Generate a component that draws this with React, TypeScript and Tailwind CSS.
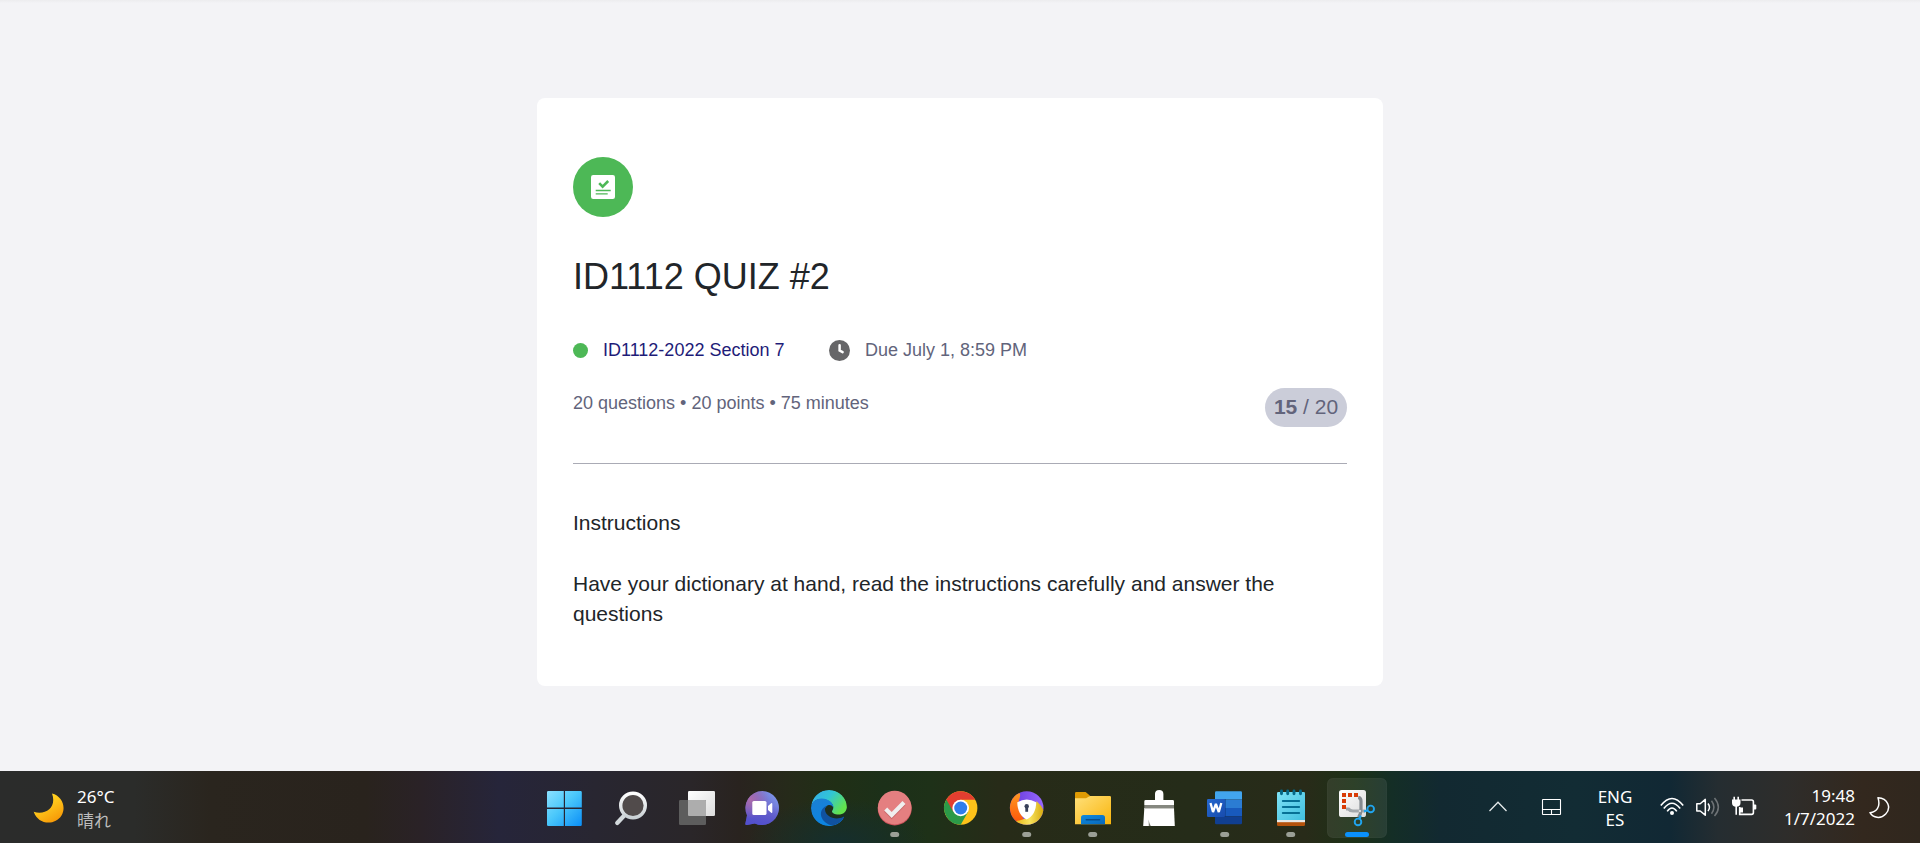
import React from "react";

const Slot = ({ children, active, running }: { children: React.ReactNode; active?: boolean; running?: boolean }) => (
  <svg width="66" height="72" viewBox="0 0 66 72" className="block shrink-0">
    {active && <rect x="4.5" y="7.5" width="59" height="59" rx="5" fill="#ffffff" fillOpacity=".08" stroke="#ffffff" strokeOpacity=".06" />}
    {children}
    {running && <rect x="29.2" y="61" width="9" height="5" rx="2.5" fill="#9b9f96" />}
    {active && <rect x="22" y="61" width="24" height="5" rx="2.5" fill="#0a91fb" />}
  </svg>
);

const Gradients = () => (
  <svg width="0" height="0" className="absolute">
    <defs>
      <linearGradient id="win" gradientUnits="userSpaceOnUse" x1="16" y1="20" x2="51" y2="55">
        <stop stopColor="#8be0ff" /><stop offset=".45" stopColor="#4bc8fb" /><stop offset="1" stopColor="#0a8ef7" />
      </linearGradient>
      <linearGradient id="grey" x1="0" y1="0" x2="1" y2="1"><stop stopColor="#ffffff" /><stop offset="1" stopColor="#dcdcdc" /></linearGradient>
      <linearGradient id="ring" x1="0" y1="0" x2="0" y2="1"><stop stopColor="#ffffff" /><stop offset="1" stopColor="#c9d0d4" /></linearGradient>
      <linearGradient id="chat" x1="0" y1="1" x2="1" y2="0">
        <stop stopColor="#5b50c8" /><stop offset=".5" stopColor="#6b62c8" /><stop offset="1" stopColor="#82a4f4" />
      </linearGradient>
      <radialGradient id="chatPink" cx=".15" cy=".25" r=".55"><stop stopColor="#ac6cab" /><stop offset="1" stopColor="#ac6cab" stopOpacity="0" /></radialGradient>
      <linearGradient id="chatLow" x1="0" y1="0" x2="0" y2="1"><stop offset=".45" stopColor="#4e4fce" stopOpacity="0" /><stop offset="1" stopColor="#4e4fce" /></linearGradient>
      <linearGradient id="edgeTop" x1="0" y1="0" x2="1" y2=".55">
        <stop stopColor="#35a9ef" /><stop offset=".5" stopColor="#31c5d5" /><stop offset="1" stopColor="#62e34d" />
      </linearGradient>
      <linearGradient id="edgeMid" x1="0" y1="0" x2=".4" y2="1"><stop stopColor="#1c7fd3" /><stop offset="1" stopColor="#0b85e2" /></linearGradient>
      <linearGradient id="avPurple" x1="0" y1="0" x2="1" y2="0"><stop stopColor="#6237d9" /><stop offset="1" stopColor="#9a69ff" /></linearGradient>
      <linearGradient id="avOrange" x1="0" y1="0" x2="0" y2="1"><stop stopColor="#ff9a24" /><stop offset="1" stopColor="#fb4e07" /></linearGradient>
      <linearGradient id="avYellow" x1="0" y1="0" x2="1" y2="0"><stop stopColor="#e7b614" /><stop offset=".5" stopColor="#f8e35d" /><stop offset="1" stopColor="#d6a80c" /></linearGradient>
      <linearGradient id="folder" x1="0" y1="0" x2="1" y2="1"><stop stopColor="#ffe07a" /><stop offset="1" stopColor="#f9b50c" /></linearGradient>
      <linearGradient id="folderBlue" x1="0" y1="0" x2="1" y2="1"><stop stopColor="#0f8ade" /><stop offset="1" stopColor="#0868bb" /></linearGradient>
      <linearGradient id="note" x1="0" y1="0" x2="1" y2="1"><stop stopColor="#7ee2f6" /><stop offset="1" stopColor="#41bfdf" /></linearGradient>
      <linearGradient id="wordBox" x1="0" y1="0" x2="1" y2="1"><stop stopColor="#2568cf" /><stop offset="1" stopColor="#174bad" /></linearGradient>
      <linearGradient id="moon" x1="0" y1="0" x2=".6" y2="1"><stop stopColor="#ffe02a" /><stop offset=".5" stopColor="#ffc71b" /><stop offset="1" stopColor="#f79b08" /></linearGradient>
      <clipPath id="avClip"><circle cx="33.7" cy="37" r="16.8" /></clipPath>
      <clipPath id="edgeClip"><circle cx="34" cy="37" r="18" /></clipPath>
      <clipPath id="wordClip"><rect x="24" y="20.3" width="27" height="33" rx="1.2" /></clipPath>
    </defs>
  </svg>
);

const Apps = () => (
  <div className="flex w-[858px] shrink-0">
    <Slot>
      <path d="M17.2 20H32.8V36.6H16V21.2Q16 20 17.2 20ZM34 20H49.6Q50.8 20 50.8 21.2V36.6H34ZM16 38H32.8V55H17.2Q16 55 16 53.8ZM34 38H50.8V53.8Q50.8 55 49.6 55H34Z" fill="url(#win)" />
    </Slot>
    <Slot>
      <path d="M27.5 44.2L20.2 52" stroke="#d3d9dc" strokeWidth="4.2" strokeLinecap="round" />
      <circle cx="36" cy="34.5" r="12.3" fill="#55504f" fillOpacity=".9" stroke="url(#ring)" strokeWidth="3.4" />
    </Slot>
    <Slot>
      <rect x="25" y="20" width="27" height="25" rx="1.2" fill="url(#grey)" />
      <rect x="16" y="29" width="27" height="25" rx="1.2" fill="#5d5d5d" />
      <path d="M25 29H42Q43 29 43 30V45H26Q25 45 25 44Z" fill="#adadad" />
    </Slot>
    <Slot>
      <path d="M33.3 20A17 17 0 1 1 25.8 52.4L18 54Q16 54.3 16.4 52.4L18 44.2A17 17 0 0 1 33.3 20Z" fill="url(#chat)" />
      <path d="M33.3 20A17 17 0 1 1 25.8 52.4L18 54Q16 54.3 16.4 52.4L18 44.2A17 17 0 0 1 33.3 20Z" fill="url(#chatLow)" fillOpacity=".8" />
      <path d="M33.3 20A17 17 0 1 1 25.8 52.4L18 54Q16 54.3 16.4 52.4L18 44.2A17 17 0 0 1 33.3 20Z" fill="url(#chatPink)" />
      <rect x="23.3" y="30" width="14.2" height="14" rx="1.6" fill="#fff" />
      <path d="M39 35L42.2 32.3Q43.3 31.7 43.3 33V41Q43.3 42.4 42.2 41.8L39 39Z" fill="#fff" />
    </Slot>
    <Slot>
      <g clipPath="url(#edgeClip)">
        <path d="M16 36C17 25 25 19 34 19C45 19 52 27 52 35C52 41 48 43.5 43.5 43.5C39.5 43.5 37 42 37 40.5C37 39.5 38.3 38.9 38.3 36.5C38.3 32 33 28 26 28C20 28 17 32 16 36Z" fill="url(#edgeTop)" />
        <path d="M16 37C16 31 21 27.5 26.5 27.5C33.5 27.5 38.5 32 38.5 36.5C37 34.4 35 33.6 33 34.3C30 35.5 28 40 31 45C34 50 41 51 48.5 47.5C46 52.5 40.5 55 34 55C23 55 16 47 16 37Z" fill="url(#edgeMid)" />
        <path d="M31.8 34.8C27 36.4 24.3 42 27 47.2C29.3 52 34.5 54.5 39 54.4C43.6 52.8 47 50.3 49 46.8C49.4 46.1 48.8 45.6 48 46C40 50 30 45 30 38.5C30 37 30.7 35.6 31.8 34.8Z" fill="#10529f" />
      </g>
    </Slot>
    <Slot running>
      <circle cx="33.7" cy="37.4" r="17" fill="#c95059" />
      <circle cx="33.7" cy="36.6" r="16.8" fill="#e47f80" />
      <path d="M24.7 39L30.7 45L43 32.3" fill="none" stroke="#a94d50" strokeOpacity=".45" strokeWidth="4.6" />
      <path d="M24.7 38L30.7 44L43 31.5" fill="none" stroke="#f0efef" strokeWidth="4.2" />
    </Slot>
    <Slot>
      <circle cx="33.7" cy="37" r="16.7" fill="#fdc21a" />
      <path d="M33.7 37L19.3 28.6A16.7 16.7 0 0 0 33.7 53.7L41 41Z" fill="#2b9a48" />
      <path d="M19.3 28.6A16.7 16.7 0 0 1 48.2 28.7H33.7L26.4 41Z" fill="#e33e30" />
      <circle cx="33.7" cy="37" r="8.3" fill="#fff" /><circle cx="33.7" cy="37" r="6.5" fill="#2f7ded" />
    </Slot>
    <Slot running>
      <g clipPath="url(#avClip)">
        <rect x="16" y="19" width="36" height="36" fill="url(#avPurple)" />
        <path d="M25.4 21C30 24 24 30 25.2 36C26 42 31 46.5 31 50L22 55L14 40L15 26Z" fill="url(#avOrange)" />
        <path d="M22 50C31 50 42 44 43.6 30Q48 34 51 40L48 55L28 56Z" fill="url(#avYellow)" />
      </g>
      <path d="M24.3 31.2Q33.7 25.6 43.2 31.2C43.2 39 39.7 46 33.7 48.4C27.7 46 24.3 39 24.3 31.2Z" fill="#fff" />
      <circle cx="33.7" cy="35.3" r="2.2" fill="#38415a" /><path d="M32.3 36H35.1V40.8H32.3Z" fill="#38415a" />
    </Slot>
    <Slot running>
      <path d="M16 22.2Q16 21 17.2 21H26.6L30.8 24.5V30H16Z" fill="#df9b04" />
      <path d="M16 27.3H27L31 25H50.8Q52 25 52 26.2V53.3H16Z" fill="url(#folder)" />
      <path d="M22 53.3V46.6Q22 44 24.6 44H43.4Q46 44 46 46.6V53.3Z" fill="url(#folderBlue)" />
      <rect x="26.5" y="48.1" width="14.8" height="1.4" rx=".7" fill="#074d8c" />
    </Slot>
    <Slot>
      <path d="M30 29V23Q30 19 34.2 19Q38.4 19 38.4 23V29H47.7Q49 29 49 30.4V34H19.3V30.4Q19.3 29 20.7 29Z" fill="#fff" />
      <rect x="19.3" y="34" width="29.7" height="3" fill="#85877f" />
      <path d="M19.3 37H49L49.8 55H18.2Z" fill="#fff" /><rect x="19.3" y="37" width="29.7" height="1" fill="#c8c9c4" />
      <path d="M23.6 48.5Q24 52 25.8 55H23.8Z" fill="#77796e" />
    </Slot>
    <Slot running>
      <g clipPath="url(#wordClip)">
        <path d="M24 20H51V28.5H24Z" fill="#42a5ee" /><path d="M24 28.5H51V37H24Z" fill="#2b7cd3" />
        <path d="M24 37H51V45.2H24Z" fill="#185abd" /><path d="M24 45.2H51V54H24Z" fill="#103f91" />
      </g>
      <path d="M24 28H35V46H24Z" fill="#0b3274" fillOpacity=".45" />
      <rect x="16" y="28" width="18" height="18" rx="1.3" fill="url(#wordBox)" />
      <path d="M19.5 32L22 41L24.9 33L27.8 41L30.3 32" fill="none" stroke="#fff" strokeWidth="2.3" strokeLinejoin="bevel" />
    </Slot>
    <Slot running>
      <rect x="20" y="44" width="28" height="11" rx="1.2" fill="#b4520c" />
      <path d="M20 45H48V51.2H20Z" fill="#e8e8e6" />
      <path d="M21.3 21H46.7Q48 21 48 22.3V49H20V22.3Q20 21 21.3 21Z" fill="url(#note)" />
      <path d="M24.5 20V22.7M30.7 20V22.7M37 20V22.7M43.5 20V22.7" stroke="#066888" strokeWidth="2.9" strokeLinecap="round" />
      <path d="M25.8 30H42.2M25.8 36H42.2M25.8 42H42.2" stroke="#067095" strokeWidth="1.9" strokeLinecap="round" />
    </Slot>
    <Slot active>
      <rect x="16" y="19" width="27" height="27" rx="2.6" fill="url(#grey)" />
      <path d="M19 22H23V26H19ZM25 22H29V26H25ZM31 22H35V26H31ZM19 28H23V32H19ZM19 34H23V38H19Z" fill="#d93b06" />
      <path d="M23 38H25.5Q27 40 30 40H42" fill="none" stroke="#a3a8ac" strokeWidth="3.2" />
      <path d="M35.2 26.3Q38 26.8 38 30V38Q38 43 35.6 46.5" fill="none" stroke="#858b90" strokeWidth="3.2" />
      <circle cx="36.9" cy="40" r="1.2" fill="#d6d9db" />
      <circle cx="47.7" cy="37.9" r="3.3" fill="none" stroke="#20a4ee" strokeWidth="1.9" />
      <circle cx="35" cy="50.9" r="3.3" fill="none" stroke="#20a4ee" strokeWidth="1.9" />
      <path d="M41 40.4L44.9 39.3M37.8 44.5L36.4 48" stroke="#20a4ee" strokeWidth="2.2" />
    </Slot>
  </div>
);

const Tray = () => (
  <div className="flex flex-1 text-[17px] leading-[23px] text-white">
    <svg width="24" height="72" viewBox="0 0 24 72" className="ml-[97px]" fill="none" stroke="#e5eaeb" strokeWidth="1.3"><path d="M3.5 40L12 31.2L20.5 40" /></svg>
    <svg width="24" height="72" viewBox="0 0 24 72" className="ml-[30px]" fill="none" stroke="#fff" strokeWidth="1.1"><rect x="2.5" y="28.5" width="18" height="15" rx=".5" /><path d="M2.5 38.5H20.5M11.5 38.5V43.5" /></svg>
    <div className="ml-[26px] w-[50px] pt-[14px] text-center">ENG<br />ES</div>
    <svg width="24" height="72" viewBox="0 0 24 72" className="ml-5" fill="none" stroke="#fff" strokeWidth="1.6">
      <path d="M.8 34.6Q12 20.4 23.2 34.6" /><path d="M3.8 37.6Q12 26.8 20.2 37.6" /><path d="M7.2 40.4Q12 33.6 16.8 40.4" /><circle cx="12" cy="42" r="2" fill="#fff" stroke="none" />
    </svg>
    <svg width="28" height="72" viewBox="0 0 28 72" className="ml-[10px]" fill="none" stroke="#fff" strokeWidth="1.5">
      <path d="M2.8 32.7H6.2L11.3 28.4V44.2L6.2 40H2.8Z" strokeLinejoin="round" /><path d="M14 32.5Q17 36.3 14 40.1" />
      <path d="M17.5 29.8Q22.3 36.3 17.5 42.8M20.5 27Q28.2 36.3 20.5 45" stroke="#6e7376" />
    </svg>
    <svg width="28" height="72" viewBox="0 0 28 72" className="ml-[9px]" fill="none" stroke="#fff" strokeWidth="1.6">
      <path d="M10.5 29H20.6Q22.4 29 22.4 30.8V41.6Q22.4 43.4 20.6 43.4H8.7V36" /><rect x="22" y="33.5" width="3.3" height="5" rx="1" fill="#fff" stroke="none" />
      <path d="M3.2 25.8V29M7.2 25.8V29M5.2 34V43.7" /><path d="M1 28.5H9.5V32Q9.5 35.7 5.2 35.7Q1 35.7 1 32Z" fill="#fff" stroke="none" />
      <path d="M8.7 36.5H12V41.5H8.7Z" fill="#fff" stroke="none" />
    </svg>
    <div className="ml-[6px] w-[90px] pt-[13px] text-right">19:48<br />1/7/2022</div>
    <svg width="24" height="72" viewBox="0 0 24 72" className="ml-3" fill="none" stroke="#fff" strokeWidth="1.5" strokeLinejoin="round"><path d="M11 26.7C21 27 24.5 37 18.7 43C13.5 48.6 6 46.8 3 41.7C9 41.2 14 36.5 11 26.7Z" /></svg>
  </div>
);

export default function App() {
  return (
    <div className="flex h-[843px] w-[1920px] flex-col overflow-hidden bg-[#f3f3f6] font-['Liberation_Sans',Arial,sans-serif]">
      <Gradients />
      <div className="h-[3px] shrink-0 bg-linear-to-b from-[#ececee] to-[#f3f3f6]" />
      <main className="flex h-[768px] shrink-0 justify-center pt-[95px]">
        <section className="h-[588px] w-[846px] rounded-lg bg-white px-9 pt-[59px] text-[#212529]">
          <svg width="60" height="60" viewBox="0 0 60 60" className="block">
            <circle cx="30" cy="30" r="30" fill="#4db856" />
            <rect x="18" y="18" width="24" height="24" rx="2.2" fill="#fff" />
            <path d="M26.2 26.2L29.6 29.6L35.2 24" fill="none" stroke="#4db856" strokeWidth="2.6" />
            <path d="M22.7 33.5H37.7M22.7 36.8H34.7" stroke="#4db856" strokeWidth="1.3" />
          </svg>
          <h1 className="mt-[33px] text-4xl leading-[54px]">ID1112 QUIZ #2</h1>
          <div className="mt-[32px] flex h-[28px] items-center text-lg leading-[28px]">
            <span className="mr-[15px] h-[15px] w-[15px] rounded-full bg-[#4db856]" />
            <span className="w-[226px] text-[#1e1c78]">ID1112-2022 Section 7</span>
            <svg width="21" height="21" viewBox="0 0 21 21" className="mr-[15px]"><circle cx="10.5" cy="10.5" r="10.5" fill="#666668" /><path d="M10.6 5.2V10.6L13.6 12.2" fill="none" stroke="#fff" strokeWidth="2.5" strokeLinecap="round" /></svg>
            <span className="text-[#62647b]">Due July 1, 8:59 PM</span>
          </div>
          <div className="mt-[24px] flex h-[39px] items-start justify-between text-[#62647b]">
            <span className="text-lg leading-[31px]">20 questions • 20 points • 75 minutes</span>
            <span className="h-[39px] w-[82px] rounded-full bg-[#cbcdd9] text-center text-[21px] leading-[38px]"><b>15</b> / 20</span>
          </div>
          <hr className="mt-9 border-[#aaabb5]" />
          <h2 className="mt-[44px] text-[21px] leading-[30px]">Instructions</h2>
          <p className="mt-[31px] text-[21px] leading-[30px]">Have your dictionary at hand, read the instructions carefully and answer the questions</p>
        </section>
      </main>
      <footer className="flex h-[72px] shrink-0 bg-[radial-gradient(ellipse_90px_45px_at_838px_72px,#152e2e,transparent),linear-gradient(90deg,#2b2c2b_0%,#2b2c2a_7%,#2a251e_11%,#29231d_19%,#2a2227_22%,#26253a_26%,#282631_31%,#2a2629_36%,#29231f_38.5%,#262a1a_41%,#202f16_43.5%,#1c3019_46%,#1e3118_48.5%,#272b18_52%,#252c19_62%,#282b19_68%,#1d3117_70.5%,#142e26_72.5%,#122931_75%,#122c34_82%,#112834_87%,#252d31_89.5%,#2e2d2b_93%,#33281e_97%,#30271e_100%)] font-['Noto_Sans','Noto_Sans_CJK_JP',sans-serif]">
        <div className="flex w-[531px] shrink-0">
          <svg width="32" height="72" viewBox="0 0 32 72" className="ml-8"><path d="M20 22.5C30 25 34.5 36 29.5 44.5C23 55 6 54 1.7 40.8C14 44.5 25 36 20 22.5Z" fill="url(#moon)" /></svg>
          <div className="ml-[13px] pt-[14px] text-[17px] leading-[23px] text-white">
            <div>26°C</div>
            <div className="text-[#bcbcbc] font-['Noto_Sans_CJK_JP',sans-serif]">晴れ</div>
          </div>
        </div>
        <Apps />
        <Tray />
      </footer>
    </div>
  );
}
